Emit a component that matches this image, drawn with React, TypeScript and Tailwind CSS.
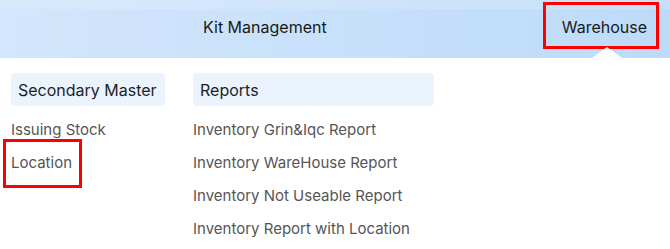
const SECONDARY = ['Issuing Stock', 'Location']
const REPORTS = [
  'Inventory Grin&Iqc Report',
  'Inventory WareHouse Report',
  'Inventory Not Useable Report',
  'Inventory Report with Location'
]

function MenuColumn({ title, items, width }: { title: string; items: string[]; width: string }) {
  return (
    <div className={`flex flex-col ${width}`}>
      <div className="flex h-[33px] items-center whitespace-nowrap rounded-[4px] bg-[#eaf3fe] px-[7px] text-[16px] text-[#1f1f1f]">
        {title}
      </div>
      <ul className="mt-[8px]">
        {items.map((item) => (
          <li key={item} className="flex h-[33px] items-center whitespace-nowrap text-[15px] text-[#555]">
            {item}
          </li>
        ))}
      </ul>
    </div>
  )
}

export default function App() {
  return (
    <div className="h-[249px] w-[670px] overflow-hidden bg-white" style={{ fontFamily: 'Inter, "Noto Sans", sans-serif' }}>
      <header className="relative h-[58px] bg-gradient-to-r from-[#d3e6fc] to-[#bddbf9]">
        <div className="absolute inset-x-0 top-0 h-[9px] bg-white/15" />
        <nav className="relative flex h-full items-center pb-[5px] text-[16px] text-[#1a1a1a]">
          <span className="ml-[203px]">Kit Management</span>
          <span className="relative ml-auto mr-[23px]">
            Warehouse
            <span className="pointer-events-none absolute -left-[19px] -right-[12px] -top-[13px] -bottom-[10px] border-[3px] border-[#ff0000]" />
          </span>
        </nav>
        <svg className="absolute bottom-0 left-[592px]" width="30" height="11" viewBox="0 0 30 11">
          <polygon points="0,11 15,0 30,11" fill="#ffffff" />
        </svg>
      </header>

      <main className="flex gap-[28px] pl-[11px] pt-[15px]">
        <div className="relative">
          <MenuColumn title="Secondary Master" items={SECONDARY} width="w-[154px]" />
          <span className="pointer-events-none absolute -left-[8px] top-[66px] h-[49px] w-[79px] border-[3px] border-[#ff0000]" />
        </div>
        <MenuColumn title="Reports" items={REPORTS} width="w-[241px]" />
      </main>
    </div>
  )
}
